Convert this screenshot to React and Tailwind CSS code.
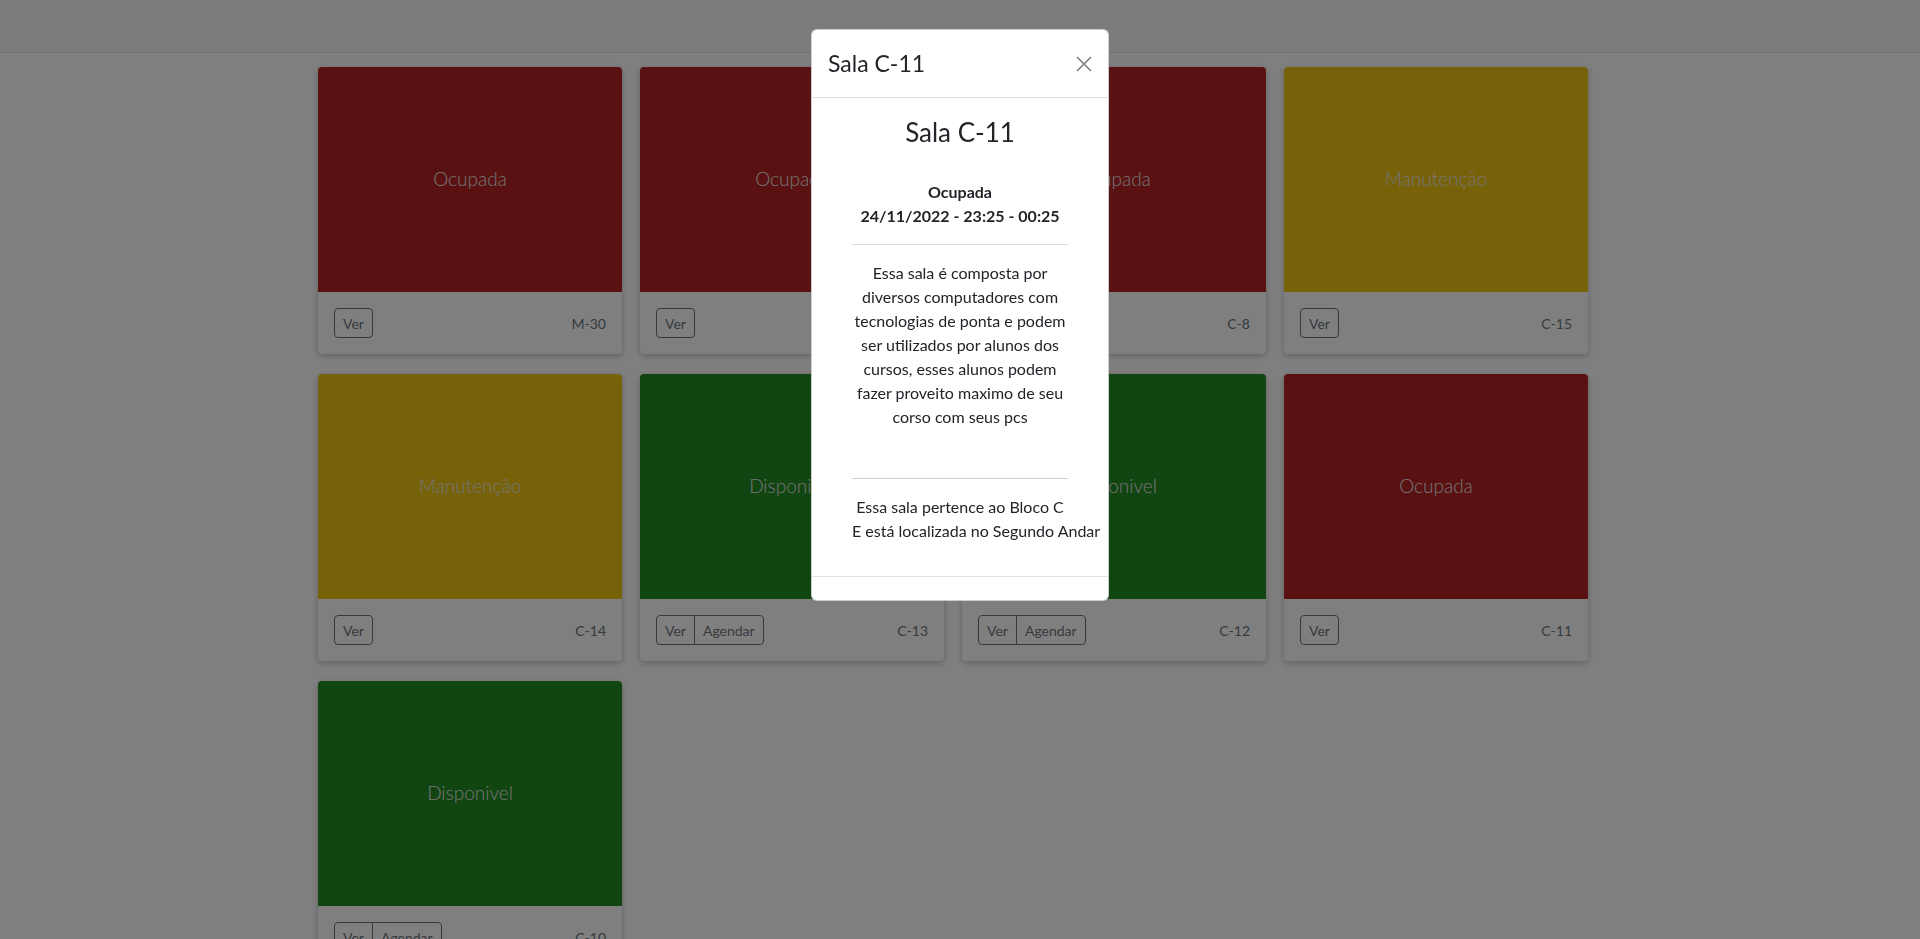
import React from "react";

const salas = [
  { status: "Ocupada", nome: "M-30" },
  { status: "Ocupada", nome: "C-9" },
  { status: "Ocupada", nome: "C-8" },
  { status: "Manutenção", nome: "C-15" },
  { status: "Manutenção", nome: "C-14" },
  { status: "Disponivel", nome: "C-13" },
  { status: "Disponivel", nome: "C-12" },
  { status: "Ocupada", nome: "C-11" },
  { status: "Disponivel", nome: "C-10" },
];

const cores = {
  Ocupada: "bg-[#b22222]",
  Manutenção: "bg-[#eec414]",
  Disponivel: "bg-[#228b22]",
};

function SalaCard({ sala }) {
  const livre = sala.status === "Disponivel";
  return (
    <div className="w-[304px] rounded overflow-hidden bg-white shadow-[0_2px_6px_rgba(0,0,0,0.25)]">
      <div
        className={`h-[225px] flex items-center justify-center ${cores[sala.status]}`}
      >
        <span className="text-[19px] font-light text-[#e8e8e8]">
          {sala.status}
        </span>
      </div>
      <div className="h-[62px] px-4 flex items-center justify-between">
        <div className="flex">
          <button
            className={`h-[30px] px-2 text-[14px] text-[#6c757d] border border-[#6c757d] ${
              livre ? "rounded-l" : "rounded"
            }`}
          >
            Ver
          </button>
          {livre && (
            <button className="h-[30px] px-2 -ml-px text-[14px] text-[#6c757d] border border-[#6c757d] rounded-r">
              Agendar
            </button>
          )}
        </div>
        <span className="text-[14px] text-[#6c757d]">{sala.nome}</span>
      </div>
    </div>
  );
}

function SalaModal() {
  return (
    <div className="fixed inset-0 z-20 flex justify-center">
      <div className="mt-[29px] w-[298px] self-start bg-white rounded-md border border-black/20 text-[#212529]">
        <div className="h-[68px] px-4 flex items-center justify-between border-b border-[#dee2e6]">
          <h5 className="text-[23px]">Sala C-11</h5>
          <svg width="16" height="16" viewBox="0 0 16 16" className="opacity-50">
            <path d="M1 1L15 15M15 1L1 15" stroke="#000" strokeWidth="1.6" />
          </svg>
        </div>
        <div className="px-4 pt-4 pb-[33px]">
          <div className="px-6 text-center">
            <h3 className="text-[26px] leading-[36px]">Sala C-11</h3>
            <div className="mt-[30px] font-bold text-[16px] leading-[24px]">
              <p>Ocupada</p>
              <p>24/11/2022 - 23:25 - 00:25</p>
            </div>
            <hr className="mt-4 border-[#dcdcdc]" />
            <p className="mt-4 leading-[24px]">
              Essa sala é composta por diversos computadores com tecnologias de
              ponta e podem ser utilizados por alunos dos cursos, esses alunos
              podem fazer proveito maximo de seu corso com seus pcs
            </p>
            <hr className="mt-[49px] border-[#cfcfcf]" />
            <div className="mt-4 leading-[24px] whitespace-nowrap">
              <p>Essa sala pertence ao Bloco C</p>
              <p>E está localizada no Segundo Andar</p>
            </div>
          </div>
        </div>
        <div className="h-[24px] border-t border-[#dee2e6]" />
      </div>
    </div>
  );
}

export default function App() {
  return (
    <div
      className="h-screen overflow-hidden bg-white"
      style={{ fontFamily: '"Segoe UI", Lato, "Noto Sans", sans-serif' }}
    >
      <div className="h-[53px] bg-[#f8f8f8] border-b border-[#e5e5e5]" />
      <div className="pl-[318px] pt-[14px]">
        <div className="grid grid-cols-[repeat(4,304px)] gap-x-[18px] gap-y-[20px]">
          {salas.map((sala, i) => (
            <SalaCard key={i} sala={sala} />
          ))}
        </div>
      </div>
      <div className="fixed inset-0 z-10 bg-black/50" />
      <SalaModal />
    </div>
  );
}
